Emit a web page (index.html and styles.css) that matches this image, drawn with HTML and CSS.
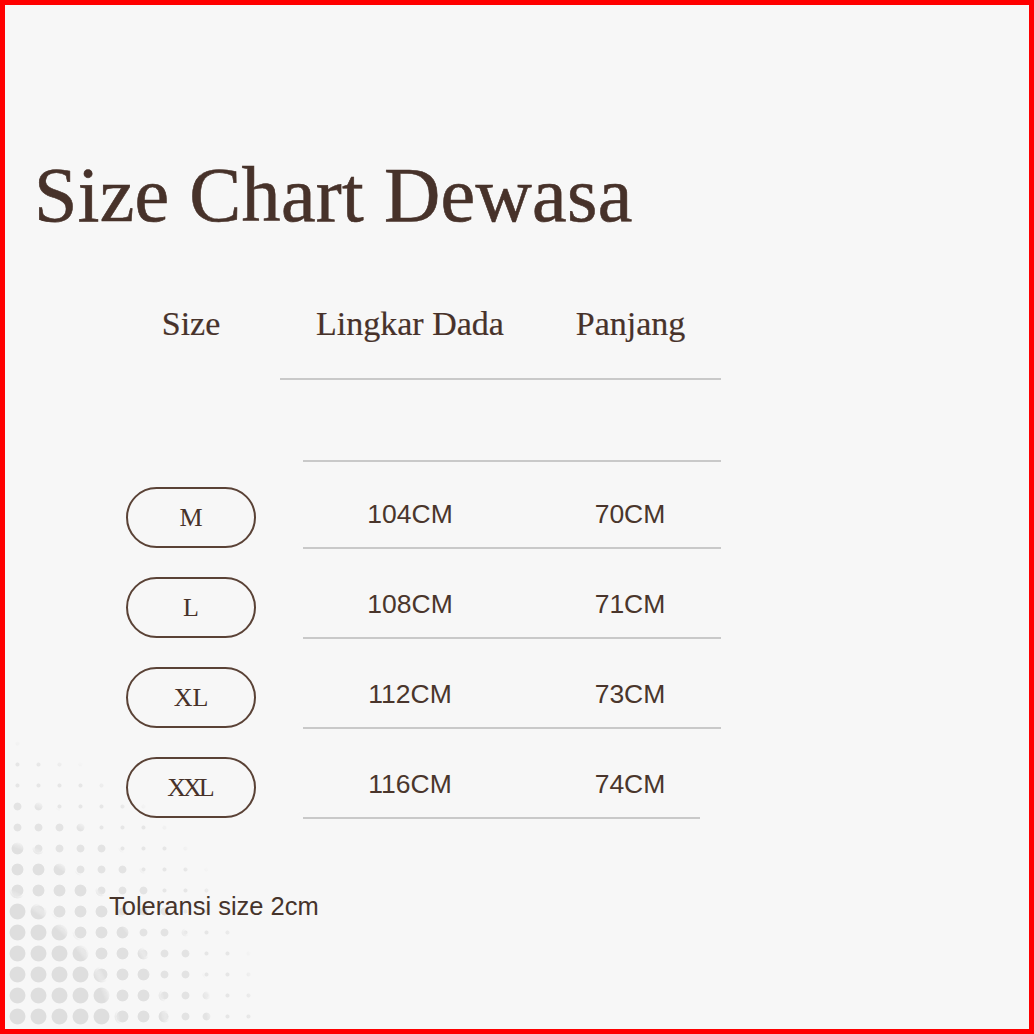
FILE: index.html
```html
<!DOCTYPE html>
<html lang="id">
<head>
<meta charset="utf-8">
<title>Size Chart Dewasa</title>
<link rel="stylesheet" href="styles.css">
</head>
<body>
<div class="frame">
  <div class="dots" aria-hidden="true">
    <span class="d d1"></span>
    <span class="d d2"></span>
    <span class="d d3"></span>
    <span class="d d4"></span>
  </div>
  <main class="content">
    <h1 class="title">Size Chart Dewasa</h1>
    <section class="chart">
      <div class="head">
        <div class="h-size">Size</div>
        <div class="h-data">
          <div class="h-col">Lingkar Dada</div>
          <div class="h-col">Panjang</div>
        </div>
      </div>
      <div class="spacer"></div>
      <div class="row first">
        <div class="pill">M</div>
        <div class="data"><span>104CM</span><span>70CM</span></div>
      </div>
      <div class="row">
        <div class="pill">L</div>
        <div class="data"><span>108CM</span><span>71CM</span></div>
      </div>
      <div class="row">
        <div class="pill">XL</div>
        <div class="data"><span>112CM</span><span>73CM</span></div>
      </div>
      <div class="row">
        <div class="pill xxl">XXL</div>
        <div class="data last"><span>116CM</span><span>74CM</span></div>
      </div>
    </section>
    <p class="note">Toleransi size 2cm</p>
  </main>
</div>
</body>
</html>
```
FILE: styles.css
```css
* { box-sizing: border-box; }
html, body { margin: 0; padding: 0; }
body { background: #f7f7f7; }

.frame {
  position: relative;
  width: 1034px;
  height: 1034px;
  border: 5px solid #ff0000;
  background: #f7f7f7;
  overflow: hidden;
}

/* decorative halftone dots */
.dots {
  position: absolute;
  left: 0;
  bottom: 0;
  width: 380px;
  height: 300px;
  z-index: 0;
}
.d {
  position: absolute;
  inset: 0;
  background-size: 21px 21px;
  background-position: 2px 4px;
}
.d1 {
  background-image: radial-gradient(circle, #dedede 0 7.5px, rgba(222,222,222,0) 8.3px);
  -webkit-mask-image: radial-gradient(circle at -65px 331px, #000 0 175px, transparent 185px);
  mask-image: radial-gradient(circle at -65px 331px, #000 0 175px, transparent 185px);
}
.d2 {
  background-image: radial-gradient(circle, #e0e0e0 0 5.5px, rgba(224,224,224,0) 6.3px);
  -webkit-mask-image: radial-gradient(circle at -65px 331px, transparent 0 178px, #000 185px 225px, transparent 233px);
  mask-image: radial-gradient(circle at -65px 331px, transparent 0 178px, #000 185px 225px, transparent 233px);
}
.d3 {
  background-image: radial-gradient(circle, #e3e3e3 0 3.5px, rgba(227,227,227,0) 4.3px);
  -webkit-mask-image: radial-gradient(circle at -65px 331px, transparent 0 227px, #000 233px 270px, transparent 278px);
  mask-image: radial-gradient(circle at -65px 331px, transparent 0 227px, #000 233px 270px, transparent 278px);
}
.d4 {
  background-image: radial-gradient(circle, #e6e6e6 0 1.6px, rgba(230,230,230,0) 2.4px);
  -webkit-mask-image: radial-gradient(circle at -65px 331px, transparent 0 272px, #000 278px 310px, transparent 330px);
  mask-image: radial-gradient(circle at -65px 331px, transparent 0 272px, #000 278px 310px, transparent 330px);
}

.content {
  position: relative;
  z-index: 1;
  padding-left: 29px;
  display: flex;
  flex-direction: column;
  align-items: flex-start;
}

.title {
  margin: 145px 0 0 0;
  font-family: "Liberation Serif", "Times New Roman", serif;
  font-weight: 400;
  font-size: 78px;
  line-height: 90px;
  color: #47322a;
  letter-spacing: 0.3px;
  -webkit-text-stroke: 0.6px #47322a;
}

.chart {
  margin-top: 64px;
  margin-left: 92px;
  display: flex;
  flex-direction: column;
}

.head {
  display: flex;
  align-items: flex-start;
}
.h-size, .h-col {
  font-family: "Liberation Serif", "Times New Roman", serif;
  font-size: 34px;
  line-height: 40px;
  color: #47322a;
  text-align: center;
  -webkit-text-stroke: 0.2px #47322a;
}
.h-size {
  width: 130px;
}
.h-data {
  margin-left: 24px;
  width: 441px;
  height: 76px;
  display: grid;
  grid-template-columns: 260px 181px;
  border-bottom: 2px solid #c9c9c9;
}

.spacer {
  margin-left: 177px;
  width: 418px;
  height: 82px;
  border-bottom: 2px solid #c9c9c9;
}

.row {
  display: flex;
  align-items: flex-end;
  height: 90px;
}
.row.first {
  height: 87px;
}

.pill {
  width: 130px;
  height: 61px;
  margin-bottom: 1px;
  border: 2px solid #5a4236;
  border-radius: 31px;
  display: flex;
  align-items: center;
  justify-content: center;
  font-family: "Liberation Serif", "Times New Roman", serif;
  font-size: 26px;
  color: #47322a;
  padding-top: 1px;
}
.pill.xxl {
  letter-spacing: -3px;
  padding-right: 3px;
}

.data {
  margin-left: 47px;
  width: 418px;
  height: 100%;
  display: grid;
  grid-template-columns: 214px 226px;
  align-items: end;
  padding-bottom: 18px;
  border-bottom: 2px solid #c9c9c9;
}
.data.last {
  width: 397px;
}
.data span {
  font-family: "Liberation Sans", Arial, sans-serif;
  font-size: 26.5px;
  line-height: 30px;
  color: #4a362c;
  text-align: center;
}

.note {
  margin: 72px 0 0 75px;
  font-family: "Liberation Sans", Arial, sans-serif;
  font-size: 25.5px;
  line-height: 30px;
  color: #46342b;
}
```
